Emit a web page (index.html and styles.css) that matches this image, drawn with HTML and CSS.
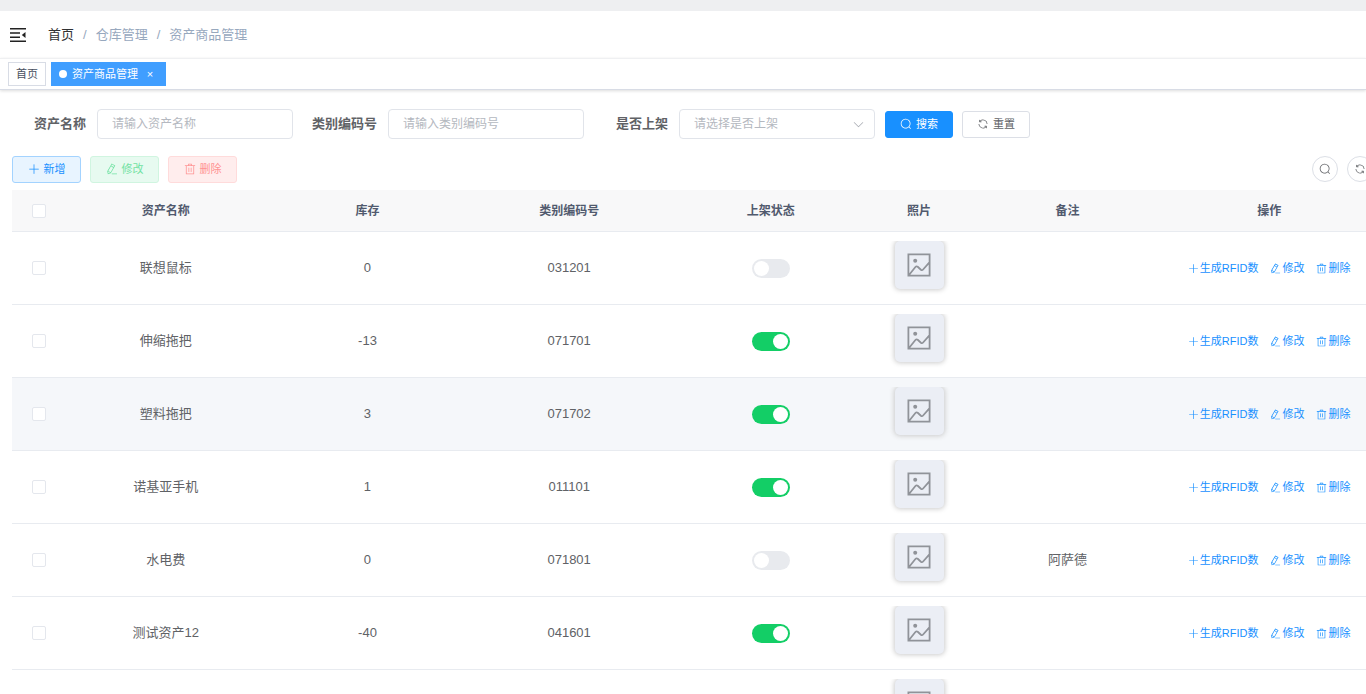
FILE: index.html
```html
<!DOCTYPE html>
<html lang="zh-CN">
<head>
<meta charset="utf-8">
<meta name="viewport" content="width=device-width, initial-scale=1">
<title>资产商品管理</title>
<link rel="stylesheet" href="styles.css">
</head>
<body>
<svg class="sprite" aria-hidden="true">
  <symbol id="search" viewBox="0 0 1024 1024"><path d="m795.904 750.72 124.992 124.928a32 32 0 0 1-45.248 45.248L750.656 795.904a416 416 0 1 1 45.248-45.248zM480 832a352 352 0 1 0 0-704 352 352 0 0 0 0 704z"/></symbol>
  <symbol id="refresh" viewBox="0 0 1024 1024"><path d="M771.776 794.88A384 384 0 0 1 128 512h64a320 320 0 0 0 555.712 216.448H654.72a32 32 0 1 1 0-64h149.056a32 32 0 0 1 32 32v148.928a32 32 0 1 1-64 0v-50.56zM276.288 295.616h92.992a32 32 0 0 1 0 64H220.16a32 32 0 0 1-32-32V178.56a32 32 0 0 1 64 0v50.56A384 384 0 0 1 896.128 512h-64a320 320 0 0 0-555.776-216.384z"/></symbol>
  <symbol id="plus" viewBox="0 0 1024 1024"><path d="M480 480V128a32 32 0 0 1 64 0v352h352a32 32 0 1 1 0 64H544v352a32 32 0 1 1-64 0V544H128a32 32 0 0 1 0-64h352z"/></symbol>
  <symbol id="edit" viewBox="0 0 1024 1024"><path d="m199.04 672.64 193.984 112 224-387.968-193.92-112-224 388.032zm-23.872 60.16 32.896 148.288 144.896-45.696L175.168 732.8zM455.04 229.248l193.92 112 56.704-98.112-193.984-112-56.64 98.112zM104.32 708.8l384-665.024 304.768 175.936L409.152 884.8h.064l-248.448 78.336L104.32 708.8zm384 254.272v-64h448v64h-448z"/></symbol>
  <symbol id="trash" viewBox="0 0 1024 1024"><path d="M160 256H96a32 32 0 0 1 0-64h256V95.936a32 32 0 0 1 32-32h256a32 32 0 0 1 32 32V192h256a32 32 0 1 1 0 64h-64v672a32 32 0 0 1-32 32H192a32 32 0 0 1-32-32V256zm448-64v-64H416v64h192zM224 896h576V256H224v640zm192-128a32 32 0 0 1-32-32V416a32 32 0 0 1 64 0v320a32 32 0 0 1-32 32zm192 0a32 32 0 0 1-32-32V416a32 32 0 0 1 64 0v320a32 32 0 0 1-32 32z"/></symbol>
  <symbol id="down" viewBox="0 0 1024 1024"><path d="M831.872 340.864 512 652.672 192.128 340.864a30.592 30.592 0 0 0-42.752 0 29.12 29.12 0 0 0 0 41.6L489.664 714.24a32 32 0 0 0 44.672 0l340.288-331.712a29.12 29.12 0 0 0 0-41.728 30.592 30.592 0 0 0-42.752 0z"/></symbol>
  <symbol id="picture" viewBox="0 0 24 24"><path d="M1.4 1.4h21.2v21.2H1.4zM1.8 22.2 8.4 14q1.1-1.2 2.3-.2l3.2 2.9q1.2.9 2.2-.2L22.4 9.4" fill="none" stroke="currentColor" stroke-width="1.8"/><circle cx="8.2" cy="7.8" r="2"/></symbol>
  <symbol id="fold" viewBox="0 0 16 14"><path d="M0 0h16v1.5H0zM0 4.2h10v1.5H0zM0 8.4h10v1.5H0zM0 12.5h16V14H0zM15.5 4v6L11.8 7z"/></symbol>
</svg>
<div class="app">
  <header class="navbar">
    <button class="fold" aria-label="收起菜单"><svg class="fold-icon"><use href="#fold"/></svg></button>
    <nav class="crumbs" aria-label="面包屑">
      <a class="crumb-home" href="#">首页</a><span>/</span><span class="crumb">仓库管理</span><span>/</span><span class="crumb">资产商品管理</span>
    </nav>
  </header>
  <nav class="tags" aria-label="标签页">
    <a class="tag" href="#">首页</a>
    <a class="tag tag-active" href="#"><span class="dot"></span>资产商品管理<span class="close">×</span></a>
  </nav>
  <main class="content">
    <form class="filters">
      <div class="field"><label for="name">资产名称</label><input class="box" id="name" type="text" placeholder="请输入资产名称"></div>
      <div class="field"><label for="code">类别编码号</label><input class="box" id="code" type="text" placeholder="请输入类别编码号"></div>
      <div class="field"><label for="shelf">是否上架</label><div class="select"><select class="box" id="shelf"><option>请选择是否上架</option><option>是</option><option>否</option></select><svg class="chevron"><use href="#down"/></svg></div></div>
      <div class="buttons">
        <button class="btn btn-primary" type="button"><svg class="icon"><use href="#search"/></svg>搜索</button>
        <button class="btn" type="reset"><svg class="icon"><use href="#refresh"/></svg>重置</button>
      </div>
    </form>
    <div class="toolbar">
      <div class="buttons">
        <button class="btn btn-add"><svg class="icon"><use href="#plus"/></svg>新增</button>
        <button class="btn btn-edit" disabled><svg class="icon"><use href="#edit"/></svg>修改</button>
        <button class="btn btn-delete" disabled><svg class="icon"><use href="#trash"/></svg>删除</button>
      </div>
      <div class="buttons tools">
        <button class="round" aria-label="搜索"><svg class="icon"><use href="#search"/></svg></button>
        <button class="round" aria-label="刷新"><svg class="icon"><use href="#refresh"/></svg></button>
      </div>
    </div>
    <table class="assets">
      <thead>
        <tr><th class="col-check"><input class="check" type="checkbox" aria-label="全选"></th><th>资产名称</th><th>库存</th><th>类别编码号</th><th>上架状态</th><th class="col-photo">照片</th><th>备注</th><th>操作</th></tr>
      </thead>
      <tbody id="rows"></tbody>
    </table>
  </main>
</div>
<script src="app.js"></script>
</body>
</html>
```
FILE: styles.css
```css
* { box-sizing: border-box; }

body {
  margin: 0;
  background: #fff;
  color: #606266;
  font: 13px/20px "Liberation Sans", "Noto Sans CJK SC", sans-serif;
}

button, input, select { font-family: inherit; margin: 0; }
button { cursor: pointer; }
a { text-decoration: none; }
svg { fill: currentColor; display: block; flex: none; }
.sprite { position: absolute; width: 0; height: 0; }

.app { height: 100vh; overflow: hidden; border-top: 11px solid #eeeff1; }

.navbar {
  display: flex;
  align-items: center;
  gap: 22px;
  height: 47px;
  padding: 0 10px;
}
.fold { padding: 0; border: 0; background: none; color: #222; }
.fold-icon { width: 16px; height: 14px; }
.crumbs { display: flex; gap: 9px; font-size: 13px; color: #97a8be; }
.crumb-home { color: #303133; }

.tags {
  display: flex;
  gap: 5px;
  height: 32px;
  padding: 3px 8px;
  border-top: 1px solid #eff0f2;
  border-bottom: 1px solid #d8dce5;
  box-shadow: 0 1px 3px rgba(0, 0, 0, .14);
}
.tag {
  display: flex;
  align-items: center;
  height: 24px;
  padding: 0 7px;
  border: 1px solid #d8dce5;
  color: #495060;
  font-size: 11px;
}
.tag-active { background: #409eff; border-color: #409eff; color: #fff; }
.dot { width: 8px; height: 8px; margin-right: 5px; border-radius: 50%; background: #fff; }
.close { width: 16px; margin-left: 4px; text-align: center; }

.content { padding: 19px 0 0 12px; }

.filters { display: flex; gap: 10px; align-items: center; margin-bottom: 17px; }
.field { display: flex; align-items: center; }
.field label { width: 85px; padding-right: 11px; text-align: right; font-weight: 700; white-space: nowrap; }
.box {
  display: block;
  width: 196px;
  height: 30px;
  padding: 0 14px;
  border: 1px solid #e1e4ea;
  border-radius: 4px;
  background: #fff;
  color: #a8abb2;
  font-size: 12px;
  appearance: none;
  outline: 0;
}
.box::placeholder { color: #b4b8c0; opacity: 1; }
select.box { color: #b4b8c0; }
.select { position: relative; }
.chevron { position: absolute; right: 10px; top: 9px; width: 13px; height: 13px; color: #a8abb2; pointer-events: none; }

.buttons { display: flex; gap: 9px; }
.btn {
  display: flex;
  align-items: center;
  justify-content: center;
  gap: 4px;
  width: 69px;
  height: 27px;
  padding: 0 0 1px;
  border: 1px solid #dcdfe6;
  border-radius: 3px;
  background: #fff;
  color: #606266;
  font-size: 11px;
  line-height: 20px;
}
.filters .btn { width: 68px; }
.icon { width: 12px; height: 12px; }
.btn-primary { background: #1890ff; border-color: #1890ff; color: #fff; }
.btn-add { background: #e8f4ff; border-color: #a3d3ff; color: #1890ff; }
.btn-edit { background: #e7faf0; border-color: #d0f5e0; color: #71e2a3; }
.btn-delete { background: #ffeded; border-color: #ffdbdb; color: #ff9292; }

.toolbar { display: flex; justify-content: space-between; margin-bottom: 7px; }
.tools { margin-right: -7px; }
.round {
  display: flex;
  align-items: center;
  justify-content: center;
  width: 26px;
  height: 26px;
  padding: 0;
  border: 1px solid #dcdfe6;
  border-radius: 50%;
  background: #fff;
  color: #606266;
}

.assets { width: calc(100% + 4px); table-layout: fixed; border-collapse: separate; border-spacing: 0; text-align: center; }
.col-check { width: 53px; }
.col-photo { width: 95px; }
th, td { padding: 0; border-bottom: 1px solid #e8ebf0; }
th { height: 42px; background: #f8f8f9; color: #515a6e; font-size: 12px; }
td { padding: 9px 0; }
.hovered td { background: #f5f7fa; }

.check {
  display: block;
  width: 14px;
  height: 14px;
  margin: 0 auto;
  border: 1px solid #e4e7ed;
  border-radius: 2px;
  background: #fff;
  appearance: none;
}
.switch {
  display: flex;
  align-items: center;
  width: 38px;
  height: 19px;
  margin: 0 auto;
  padding: 2px;
  border-radius: 10px;
  background: #e8eaee;
  appearance: none;
}
.switch::before { content: ""; width: 15px; height: 15px; border-radius: 50%; background: #fff; }
.switch:checked { justify-content: flex-end; background: #13ce66; }

.photo {
  display: flex;
  align-items: center;
  justify-content: center;
  width: 49px;
  height: 48px;
  margin: 0 auto 6px;
  border-radius: 5px;
  background: #ebeef5;
  box-shadow: 0 0 5px 1px #ccc;
  clip-path: inset(0 -7px -7px -7px);
  color: #909399;
}
.photo svg { width: 24px; height: 24px; }

.actions { display: flex; justify-content: center; gap: 12px; font-size: 11px; }
.actions a { display: flex; align-items: center; gap: 1px; color: #1890ff; white-space: nowrap; }
.actions svg { width: 11px; height: 11px; }
```
FILE: app.js
```js
const assets = [
  { name: "联想鼠标", stock: "0", code: "031201", on: false, remark: "" },
  { name: "伸缩拖把", stock: "-13", code: "071701", on: true, remark: "" },
  { name: "塑料拖把", stock: "3", code: "071702", on: true, remark: "", hovered: true },
  { name: "诺基亚手机", stock: "1", code: "011101", on: true, remark: "" },
  { name: "水电费", stock: "0", code: "071801", on: false, remark: "阿萨德" },
  { name: "测试资产12", stock: "-40", code: "041601", on: true, remark: "" },
  { name: "", stock: "", code: "", on: null, remark: "" }
];

const link = (icon, text) => `<a href="#"><svg><use href="#${icon}"/></svg>${text}</a>`;

document.getElementById("rows").innerHTML = assets.map(a => `
  <tr class="${a.hovered ? "hovered" : ""}">
    <td>${a.on === null ? "" : `<input class="check" type="checkbox" aria-label="选择${a.name}">`}</td>
    <td>${a.name}</td>
    <td>${a.stock}</td>
    <td>${a.code}</td>
    <td>${a.on === null ? "" : `<input class="switch" type="checkbox" role="switch" aria-label="上架状态" ${a.on ? "checked" : ""}>`}</td>
    <td><div class="photo"><svg><use href="#picture"/></svg></div></td>
    <td>${a.remark}</td>
    <td>${a.on === null ? "" : `<div class="actions">${link("plus", "生成RFID数")}${link("edit", "修改")}${link("trash", "删除")}</div>`}</td>
  </tr>`).join("");
```
